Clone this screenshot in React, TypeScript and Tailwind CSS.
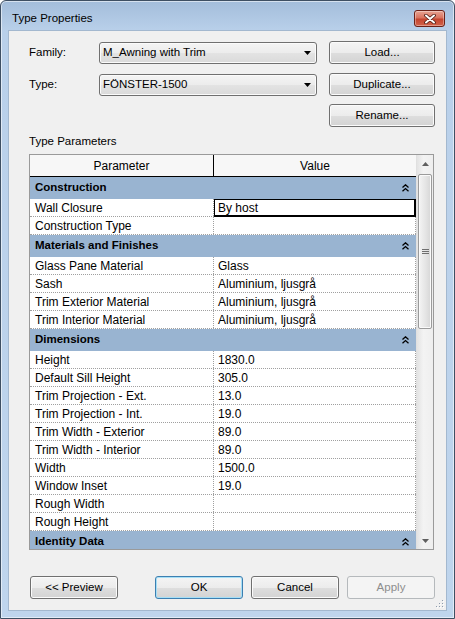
import React from 'react';

type Group = { name: string; rows: [string, string][] };

const groups: Group[] = [
    { name: 'Construction', rows: [['Wall Closure', 'By host'], ['Construction Type', '']] },
    {
        name: 'Materials and Finishes',
        rows: [
            ['Glass Pane Material', 'Glass'],
            ['Sash', 'Aluminium, ljusgrå'],
            ['Trim Exterior Material', 'Aluminium, ljusgrå'],
            ['Trim Interior Material', 'Aluminium, ljusgrå'],
        ],
    },
    {
        name: 'Dimensions',
        rows: [
            ['Height', '1830.0'],
            ['Default Sill Height', '305.0'],
            ['Trim Projection - Ext.', '13.0'],
            ['Trim Projection - Int.', '19.0'],
            ['Trim Width - Exterior', '89.0'],
            ['Trim Width - Interior', '89.0'],
            ['Width', '1500.0'],
            ['Window Inset', '19.0'],
            ['Rough Width', ''],
            ['Rough Height', ''],
        ],
    },
    { name: 'Identity Data', rows: [] },
];

const Btn: React.FC<{ children: React.ReactNode; className?: string; variant?: 'default' | 'primary' | 'disabled' }> = ({
    children,
    className = '',
    variant = 'default',
}) => {
    const look =
        variant === 'primary'
            ? 'border-[#3c7fb1] shadow-[inset_0_0_0_1px_#a6dff6] text-black'
            : variant === 'disabled'
              ? 'border-[#b5b9bc] !bg-none bg-[#f4f4f4] text-[#8d8d8d]'
              : 'border-[#707070] shadow-[inset_0_0_0_1px_#fbfbfb] text-black';
    return (
        <div
            className={`h-[23px] flex items-center justify-center rounded-[3px] border bg-[linear-gradient(to_bottom,#f4f4f4_0%,#ececec_50%,#dedede_51%,#d3d3d3_100%)] text-[11.5px] ${look} ${className}`}
        >
            {children}
        </div>
    );
};

const Combo: React.FC<{ value: string }> = ({ value }) => (
    <div className="w-[218px] h-[22px] flex items-center justify-between rounded-[3px] border border-[#707070] bg-[linear-gradient(to_bottom,#f4f4f4_0%,#ececec_50%,#e3e3e3_51%,#dadada_100%)] shadow-[inset_0_0_0_1px_#fbfbfb] pl-[3px] pr-[5px] text-[11.5px]">
        <span>{value}</span>
        <svg width="7" height="4" viewBox="0 0 7 4">
            <path d="M0 0H7L3.5 4Z" fill="#000" />
        </svg>
    </div>
);

const Chevrons = () => (
    <svg width="7" height="8" viewBox="0 0 7 8">
        <path d="M0.5 3.5L3.5 0.8L6.5 3.5M0.5 7.3L3.5 4.6L6.5 7.3" fill="none" stroke="#000" strokeWidth="1.3" />
    </svg>
);

const Grip = () => (
    <svg width="8" height="8" viewBox="0 0 8 8">
        {[
            [6, 0],
            [3, 3],
            [6, 3],
            [0, 6],
            [3, 6],
            [6, 6],
        ].map(([x, y], i) => (
            <g key={i}>
                <rect x={x + 1} y={y + 1} width="1" height="1" fill="#fff" />
                <rect x={x} y={y} width="1" height="1" fill="#8e9cad" />
            </g>
        ))}
    </svg>
);

export default function App() {
    return (
        <div className="w-[455px] h-[619px] bg-white font-['Liberation_Sans',Arial,sans-serif]">
            <div className="w-[455px] h-[619px] flex flex-col rounded-t-[6px] border border-[#3e4f63] px-[7px] bg-[linear-gradient(to_bottom,#a3bddb_0px,#b9d0ea_30px,#bfd5ed_100%)] shadow-[inset_0_0_0_1px_rgba(255,255,255,0.55)]">
                {/* title bar */}
                <div className="h-[29px] flex items-center justify-between pt-[6px] pl-[4px] pr-[2px]">
                    <span className="text-[11.5px] text-black">Type Properties</span>
                    <div className="w-[31px] h-[17px] flex items-center justify-center rounded-[3px] border border-[#6b2117] bg-[linear-gradient(to_bottom,#e8a493_0%,#d9735f_45%,#c4452f_55%,#d2634c_100%)] shadow-[inset_0_0_0_1px_rgba(255,255,255,0.35)]">
                        <svg width="12" height="10" viewBox="0 0 12 10">
                            <path d="M2 1.5L10 8.5M10 1.5L2 8.5" stroke="#4a1a12" strokeWidth="3.6" strokeLinecap="round" />
                            <path d="M2 1.5L10 8.5M10 1.5L2 8.5" stroke="#fff" strokeWidth="2" strokeLinecap="round" />
                        </svg>
                    </div>
                </div>

                {/* client area */}
                <div className="h-[581px] bg-[#f0f0f0] border border-[#a3b8cf] flex flex-col pl-[20px] pr-[11px] pt-[10px] relative text-black">
                    <div className="flex items-center h-[23px]">
                        <span className="w-[70px] text-[11.5px]">Family:</span>
                        <Combo value="M_Awning with Trim" />
                        <Btn className="ml-auto w-[106px]">Load...</Btn>
                    </div>
                    <div className="flex items-center h-[23px] mt-[9px]">
                        <span className="w-[70px] text-[11.5px]">Type:</span>
                        <Combo value="FÖNSTER-1500" />
                        <Btn className="ml-auto w-[106px]">Duplicate...</Btn>
                    </div>
                    <div className="flex justify-end h-[23px] mt-[8px]">
                        <Btn className="w-[106px]">Rename...</Btn>
                    </div>
                    <div className="mt-[7px] h-[14px] leading-[14px] text-[11.5px]">Type Parameters</div>

                    {/* property grid */}
                    <div className="mt-[6px] w-[405px] h-[396px] border border-[#9a9a9a] flex bg-white">
                        <div className="w-[386px] flex flex-col overflow-hidden">
                            <div className="h-[22px] shrink-0 flex border-b border-black bg-[#f7f7f7] text-[12px]">
                                <div className="w-[184px] border-r border-black flex items-center justify-center">Parameter</div>
                                <div className="flex-1 flex items-center justify-center">Value</div>
                            </div>
                            {groups.map((g) => (
                                <React.Fragment key={g.name}>
                                    <div className="h-[22px] shrink-0 flex items-center justify-between bg-[#99b4d1] pl-[5px] pr-[7px] text-[11.5px] font-bold">
                                        <span>{g.name}</span>
                                        <Chevrons />
                                    </div>
                                    {g.rows.map(([p, v]) => (
                                        <div key={p} className="h-[18px] shrink-0 flex border-b border-dotted border-[#a0a0a0] text-[12px]">
                                            <div className="w-[184px] border-r border-dotted border-[#a0a0a0] pl-[5px] flex items-center">{p}</div>
                                            {p === 'Wall Closure' ? (
                                                <div className="flex-1 -mb-[1px] border border-black shadow-[inset_-1px_-1px_0_#000] pl-[3px] flex items-center">
                                                    {v}
                                                </div>
                                            ) : (
                                                <div className="flex-1 border-r border-dotted border-[#a0a0a0] pl-[4px] flex items-center">{v}</div>
                                            )}
                                        </div>
                                    ))}
                                </React.Fragment>
                            ))}
                        </div>

                        {/* scrollbar */}
                        <div className="w-[17px] flex flex-col bg-[linear-gradient(to_right,#e3e3e3,#f3f3f3_40%,#eeeeee)] border-l border-[#e0e0e0]">
                            <div className="h-[17px] flex items-center justify-center">
                                <svg width="7" height="4" viewBox="0 0 7 4">
                                    <path d="M0 4L3.5 0L7 4Z" fill="#5f5f5f" />
                                </svg>
                            </div>
                            <div className="mt-[2px] mx-[1px] h-[155px] rounded-[2px] border border-[#9b9b9b] bg-[linear-gradient(to_right,#f4f4f4,#e6e6e6_50%,#d6d6d6)] shadow-[inset_0_0_0_1px_#fafafa] flex flex-col items-center justify-center gap-[1px]">
                                <div className="w-[7px] h-[1px] bg-[#6f6f6f]" />
                                <div className="w-[7px] h-[1px] bg-[#6f6f6f]" />
                                <div className="w-[7px] h-[1px] bg-[#6f6f6f]" />
                            </div>
                            <div className="mt-auto h-[17px] flex items-center justify-center">
                                <svg width="7" height="4" viewBox="0 0 7 4">
                                    <path d="M0 0L3.5 4L7 0Z" fill="#5f5f5f" />
                                </svg>
                            </div>
                        </div>
                    </div>

                    {/* footer buttons */}
                    <div className="mt-[26px] flex items-center">
                        <Btn className="ml-[1px] w-[88px]">&lt;&lt; Preview</Btn>
                        <Btn variant="primary" className="ml-[37px] w-[88px]">OK</Btn>
                        <Btn className="ml-[8px] w-[88px]">Cancel</Btn>
                        <Btn variant="disabled" className="ml-[8px] w-[88px]">Apply</Btn>
                    </div>

                    <div className="absolute right-[2px] bottom-[2px]">
                        <Grip />
                    </div>
                </div>
            </div>
        </div>
    );
}
